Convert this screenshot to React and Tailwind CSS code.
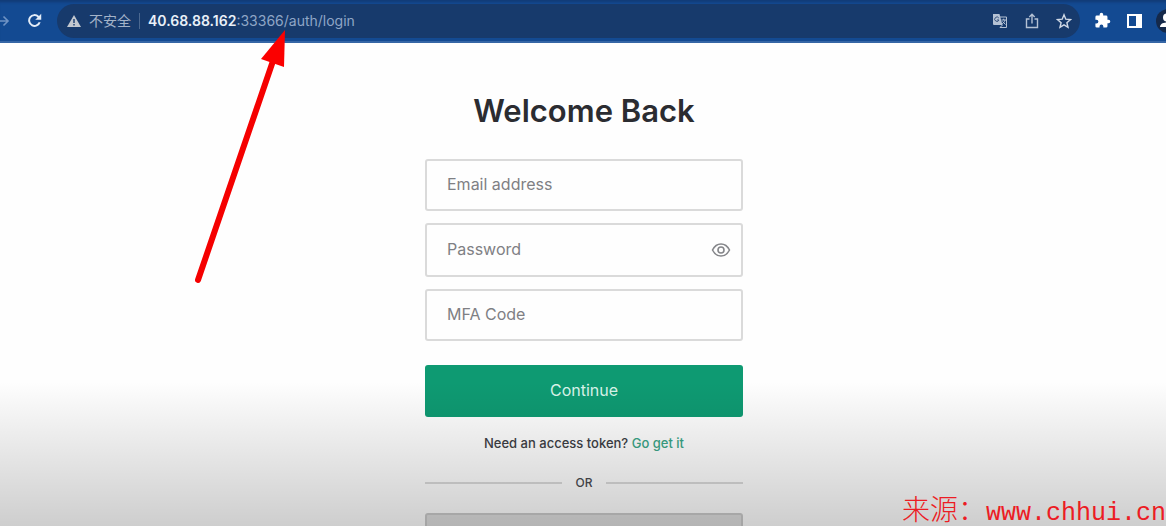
const Field = ({ id, label, type = "text", tall, children }) => {

  return (

    <div className={`relative flex items-center ${tall ? "h-[54px]" : "h-[52px]"}`}>

      <input
        id={id}
        type={type}
        className="h-full w-full rounded-[3px] border-2 border-[#dadada] bg-transparent px-5 text-base text-[#2d333a] outline-none"
      />

      <label htmlFor={id} className="absolute left-[22px] pb-0.5 text-base text-[#7f8084]">
        {label}
      </label>

      {children}

    </div>

  )

}

const AddressBar = () => {

  return (

    <header className="flex h-[43px] shrink-0 items-center overflow-hidden border-b-2 border-[#3566a5] bg-[#134a92] shadow-[inset_0_4px_3px_-2px_#123a75]">

      {/* Navigation */}

      <button aria-label="Forward" className="w-3 shrink-0 text-[#6f93c4]">
        <svg width="12" height="16" viewBox="0 0 12 16" fill="none" stroke="currentColor" strokeWidth="1.600">
          <path d="M0 8h8M3.500 3.500L8 8l-4.500 4.500" />
        </svg>
      </button>

      <button aria-label="Reload" className="ml-3.5 shrink-0 text-[#e3ecf7]">
        <svg width="17" height="17" viewBox="0 0 24 24" fill="currentColor">
          <path d="M18.400 5.600A9 9 0 1 0 20.700 14.500h-3A6.200 6.200 0 1 1 16.400 7.600L13 11H21.500V2.500z" />
        </svg>
      </button>

      {/* Omnibox */}

      <div className="ml-3.5 flex h-[34px] min-w-0 flex-1 items-center rounded-full bg-[#173a6c] pl-2.5 pr-2 text-sm text-[#8fa6c6]">

        <svg className="shrink-0" width="14" height="12" viewBox="0 0 14 12">
          <path d="M7 0L14 12H0z" fill="#c3c8cf" />
          <path d="M6.300 4h1.400v4H6.300zM6.300 9h1.400v1.400H6.300z" fill="#173a6c" />
        </svg>

        <span className="ml-2 whitespace-nowrap text-[#a3b3c9]">不安全</span>

        <span className="mx-2 h-4 w-px shrink-0 bg-[#4b6890]" />

        <span className="flex-1 whitespace-nowrap">
          <span className="font-semibold text-[#e9f0f8]">40.68.88.162</span>:33366/auth/login
        </span>

        <div className="flex shrink-0 items-center gap-4 text-[#b4c1d4]">

          <button aria-label="Translate">
            <svg width="16" height="16" viewBox="0 0 16 16" fill="none">
              <path d="M7 4h7.500v10.500H8" stroke="currentColor" />
              <path d="M1 1h6.500l3 11H2a1 1 0 0 1-1-1z" fill="currentColor" />
              <path d="M6.800 5A2.200 2.200 0 1 0 7 7H5" stroke="#36527d" />
              <path d="M9.500 7H14M11.700 5.700V7M13 7c-.5 2-1.800 3.300-3 4M10.500 8.500l3 3M8 14.500l2.500-2.500" stroke="currentColor" />
            </svg>
          </button>

          <button aria-label="Share">
            <svg width="16" height="16" viewBox="0 0 16 16" fill="none" stroke="currentColor" strokeWidth="1.400">
              <path d="M5.500 6h-3v8.500h11V6h-3M8 10.500V1.500M5.300 4L8 1.300 10.700 4" />
            </svg>
          </button>

          <button aria-label="Bookmark" className="text-[#d0d9e6]">
            <svg width="16" height="16" viewBox="0 0 16 16" fill="none" stroke="currentColor" strokeWidth="1.400">
              <path d="M8 1.800l1.800 4.400 4.700.4-3.600 3.100 1.100 4.600L8 11.800l-4 2.500 1.100-4.600-3.600-3.100 4.700-.4z" />
            </svg>
          </button>

        </div>

      </div>

      {/* Extensions and profile */}

      <button aria-label="Extensions" className="ml-3.5 shrink-0 text-white">
        <svg width="17" height="17" viewBox="0 0 24 24" fill="currentColor">
          <path d="M20.500 11H19V7a2 2 0 0 0-2-2h-4V3.500a2.500 2.500 0 0 0-5 0V5H4a2 2 0 0 0-2 2v3.800h1.500a2.700 2.700 0 0 1 0 5.400H2V20a2 2 0 0 0 2 2h3.800v-1.500a2.700 2.700 0 0 1 5.400 0V22H17a2 2 0 0 0 2-2v-4h1.500a2.500 2.500 0 0 0 0-5z" />
        </svg>
      </button>

      <button aria-label="Side panel" className="ml-4 shrink-0 text-white">
        <svg width="15" height="14" viewBox="0 0 15 14">
          <path d="M1 1h13v12H1z" fill="none" stroke="currentColor" strokeWidth="2" />
          <path d="M9 1h5v12H9z" fill="currentColor" />
        </svg>
      </button>

      <button aria-label="Profile" className="ml-3.5 w-2.5 shrink-0 overflow-hidden">
        <svg width="24" height="24" viewBox="0 0 24 24">
          <circle cx="12" cy="12" r="12" fill="#15294a" />
          <circle cx="11" cy="8.500" r="4" fill="#fff" />
          <path d="M4 18c0-3 3-4.500 7-4.500s7 1.500 7 4.500z" fill="#fff" />
        </svg>
      </button>

    </header>

  )

}

const App = () => {

  return (

    <div className="relative flex h-screen flex-col overflow-hidden bg-[#fefefe] font-['Inter','Noto_Sans_CJK_SC',sans-serif]">

      <AddressBar />

      {/* Login form */}

      <main className="mx-auto w-full max-w-[320px] pt-12 pl-0.5">

        <h1 className="text-center text-[31px] leading-10 font-semibold text-[#2b2c31]">
          Welcome Back
        </h1>

        <form className="mt-7" onSubmit={(e)=>e.preventDefault()}>

          <div className="flex flex-col gap-3">

            <Field id="email" label="Email address" type="email" />

            <Field id="password" label="Password" type="password" tall>
              <button type="button" aria-label="Show password" className="absolute right-3 text-[#85868a]">
                <svg width="20" height="16" viewBox="0 0 20 16" fill="none" stroke="currentColor" strokeWidth="1.600">
                  <path d="M1.500 8C3.500 4 6.500 2 10 2s6.500 2 8.500 6c-2 4-5 6-8.500 6s-6.500-2-8.500-6z" />
                  <circle cx="10" cy="8" r="3" />
                </svg>
              </button>
            </Field>

            <Field id="mfa" label="MFA Code" />

          </div>

          <button type="submit" className="mt-6 h-[52px] w-full rounded-[3px] bg-[#0e9a72] pb-0.5 text-base text-[#d8f3e9]">
            Continue
          </button>

        </form>

        <p className="mt-4 text-center text-[13px] leading-5 font-medium text-[#3d3f45]">
          Need an access token? <a href="#token" className="text-[#3aa587]">Go get it</a>
        </p>

        <div className="mt-5 flex items-center gap-3 text-xs leading-5 font-medium text-[#4a4b50]">
          <span className="h-0.5 flex-1 bg-[#dadada]" />
          <span className="w-5 text-center">OR</span>
          <span className="h-0.5 flex-1 bg-[#dadada]" />
        </div>

        <button aria-label="More sign in options" className="mt-5 block h-[52px] w-full rounded-[3px] border-2 border-[#cacaca] bg-[#dedede]" />

      </main>

      {/* Shade over the bottom of the page */}

      <div className="pointer-events-none absolute inset-x-0 bottom-0 h-[144px] bg-linear-to-b from-transparent to-black/19" />

      {/* Pointer to the port in the url */}

      <svg className="pointer-events-none absolute top-7 left-48" width="100" height="260" viewBox="0 0 100 260">
        <path d="M6 252L82 30" stroke="#f50000" strokeWidth="6" strokeLinecap="round" />
        <path d="M93 2L69 31L92 39z" fill="#fb0000" />
      </svg>

      {/* Watermark */}

      <p className="absolute right-0 bottom-0 flex items-baseline whitespace-nowrap text-[#ec1c24]">
        <span className="font-['Noto_Sans_CJK_SC',sans-serif] text-[28px] leading-6 font-light">来源：</span>
        <span className="font-['Liberation_Mono',monospace] text-[25px] leading-6">www.chhui.cn</span>
      </p>

    </div>

  )

}

export default App
